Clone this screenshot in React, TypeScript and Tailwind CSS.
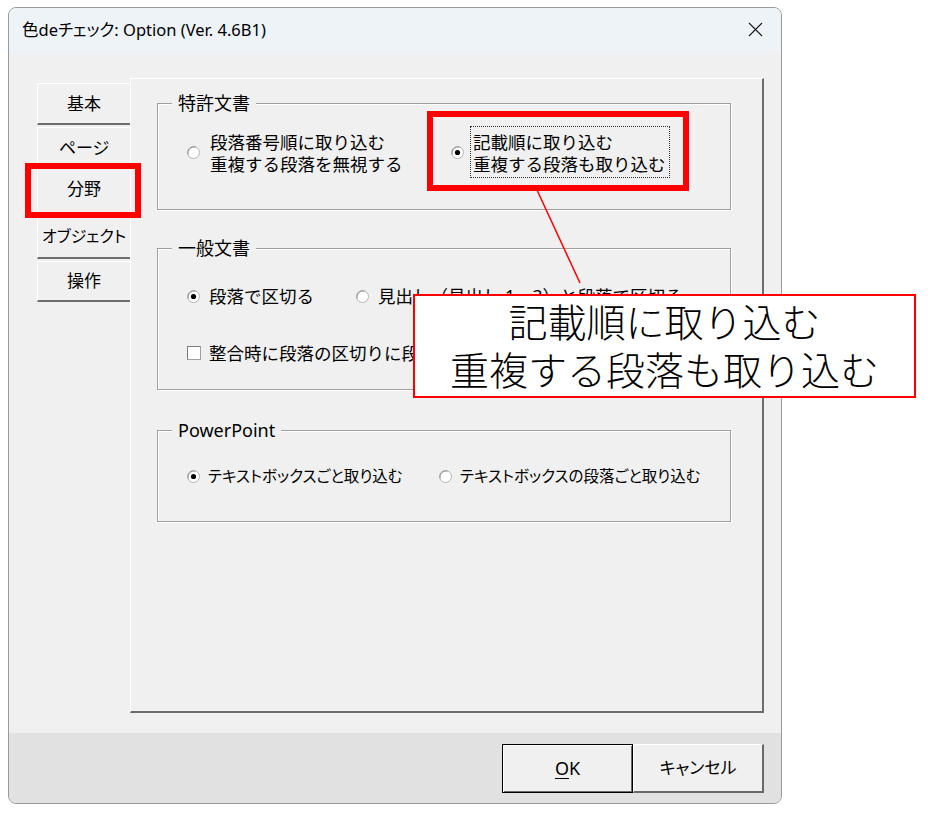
const font = "font-['Noto_Sans','Noto_Sans_CJK_JP',sans-serif]";

const tabs = [
  { label: "基本", cls: "mt-0 h-[42px] border-b-2 border-b-[#6d6d6d] text-[17px]" },
  { label: "ページ", cls: "mt-[2px] h-[40px] text-[17px] [font-feature-settings:'palt']" },
  { label: "分野", cls: "mt-0 h-[44px] border-t-0 text-[17px]" },
  { label: "オブジェクト", cls: "mt-[2px] h-[46px] border-b-2 border-b-[#6d6d6d] text-[16px] [font-feature-settings:'palt']" },
  { label: "操作", cls: "mt-[2px] h-[41px] border-b-2 border-b-[#6d6d6d] text-[17px]" },
];

const Radio = ({ checked }: { checked?: boolean }) => (
  <svg width="13" height="13" viewBox="0 0 13 13" className="shrink-0">
    <circle cx="6.5" cy="6.5" r="6" fill="#ffffff" stroke="#b4b4b4" />
    <path d="M1.2 8.5 A6 6 0 0 1 8.5 1.2" fill="none" stroke="#8c8c8c" />
    {checked && <circle cx="6.5" cy="6.5" r="2.6" fill="#000000" />}
  </svg>
);

const GroupBox: React.FunctionComponent<{
  title: string;
  className: string;
  children: React.ReactNode;
}> = ({ title, className, children }) => (
  <div
    className={`relative border border-[#a0a0a0] shadow-[inset_1px_1px_0_#ffffff,1px_1px_0_#ffffff] ${className}`}
  >
    <span className="absolute left-[14px] top-[-13px] bg-[#f0f0f0] px-[6px] text-[18px] leading-[24px]">
      {title}
    </span>
    {children}
  </div>
);

export default function App() {
  return (
    <div
      className={`relative h-[818px] w-[932px] overflow-hidden bg-white pl-[8px] pt-[7px] text-[#000000] ${font}`}
    >
      <div className="flex h-[797px] w-[774px] flex-col overflow-hidden rounded-lg border border-[#9a9a9a] bg-[#f0f0f0]">
        {/* title bar */}
        <div className="flex h-[44px] shrink-0 items-center justify-between bg-[#eef3f8] pl-[13px] pr-[18px]">
          <span className="text-[16.5px] leading-[20px] [font-feature-settings:'palt']">
            色deチェック: Option (Ver. 4.6B1)
          </span>
          <svg width="15" height="15" viewBox="0 0 15 15" className="mb-[2px]">
            <path d="M1 1L14 14M14 1L1 14" stroke="#1a1a1a" strokeWidth="1.1" />
          </svg>
        </div>

        {/* client area */}
        <div className="flex flex-1 pb-[20px] pl-[28px] pr-[17px] pt-[26px]">
          <div className="flex w-[93px] shrink-0 flex-col pt-[5px]">
            {tabs.map((t) => (
              <div
                key={t.label}
                className={`flex items-center justify-center border-l border-t border-white bg-[#f0f0f0] leading-[22px] ${t.cls}`}
              >
                {t.label}
              </div>
            ))}
          </div>

          <div className="flex flex-1 flex-col border-b-2 border-l border-r-2 border-t border-b-[#6d6d6d] border-l-white border-r-[#6d6d6d] border-t-white pl-[26px] pr-[31px]">
            <GroupBox title="特許文書" className="mt-[24px] h-[107px] pl-[29px] pt-[22px]">
              <div className="flex items-center text-[17.5px] leading-[22px]">
                <div className="flex w-[264px] items-center gap-[8px]">
                  <Radio />
                  <div className="border border-transparent pb-[2px] pl-[1px] pr-[2px] pt-[4px]">
                    <div>段落番号順に取り込む</div>
                    <div>重複する段落を無視する</div>
                  </div>
                </div>
                <div className="flex items-center gap-[6px]">
                  <Radio checked />
                  <div className="border border-dotted border-[#333333] pb-[2px] pl-[2px] pr-[3px] pt-[4px]">
                    <div>記載順に取り込む</div>
                    <div>重複する段落も取り込む</div>
                  </div>
                </div>
              </div>
            </GroupBox>

            <GroupBox title="一般文書" className="mt-[38px] h-[142px] pl-[29px] pt-[36px]">
              <div className="flex items-center text-[17.5px] leading-[22px]">
                <div className="flex w-[169px] items-center gap-[9px]">
                  <Radio checked />
                  <span>段落で区切る</span>
                </div>
                <div className="flex items-center gap-[9px]">
                  <Radio />
                  <span>見出し（見出し 1～3）と段落で区切る</span>
                </div>
              </div>
              <div className="mt-[35px] flex items-center gap-[8px] text-[17.5px] leading-[22px]">
                <div className="h-[14px] w-[14px] shrink-0 border border-[#a0a0a0] border-l-[#7a7a7a] border-t-[#7a7a7a] bg-white" />
                <span>整合時に段落の区切りに段落記号を使用する</span>
              </div>
            </GroupBox>

            <GroupBox title="PowerPoint" className="mt-[40px] h-[92px] pl-[29px] pt-[34px]">
              <div className="flex items-center text-[15.5px] leading-[22px] [font-feature-settings:'palt']">
                <div className="flex w-[252px] items-center gap-[8px]">
                  <Radio checked />
                  <span>テキストボックスごと取り込む</span>
                </div>
                <div className="flex items-center gap-[8px]">
                  <Radio />
                  <span>テキストボックスの段落ごと取り込む</span>
                </div>
              </div>
            </GroupBox>
          </div>
        </div>

        {/* footer */}
        <div className="flex h-[70px] shrink-0 items-start justify-end bg-[#e1e1e1] pr-[17px] pt-[11px]">
          <button className="flex h-[49px] w-[131px] items-center justify-center border border-black bg-[#f0f0f0] text-[18px] shadow-[inset_1px_1px_0_#ffffff,inset_-1px_-1px_0_#696969]">
            <span>
              <span className="underline underline-offset-[3px]">O</span>K
            </span>
          </button>
          <button className="flex h-[49px] w-[131px] items-center justify-center border-b-2 border-l border-r-2 border-t border-b-[#696969] border-l-white border-r-[#696969] border-t-white bg-[#f0f0f0] text-[17px] [font-feature-settings:'palt']">
            キャンセル
          </button>
        </div>
      </div>

      {/* annotations */}
      <div className="absolute left-[25px] top-[163px] h-[55px] w-[116px] border-[6px] border-[#ff0000]" />
      <div className="absolute left-[427px] top-[111px] h-[80px] w-[262px] border-[6px] border-[#ff0000]" />
      <svg className="absolute left-0 top-0" width="932" height="818">
        <line x1="537" y1="190" x2="580" y2="283" stroke="#ff0000" strokeWidth="1.5" />
      </svg>
      <div className="absolute left-[413px] top-[294px] flex h-[104px] w-[503px] flex-col items-center justify-center border-2 border-[#ff0000] bg-white text-[39px] font-light leading-[48px]">
        <div>記載順に取り込む</div>
        <div>重複する段落も取り込む</div>
      </div>
    </div>
  );
}
